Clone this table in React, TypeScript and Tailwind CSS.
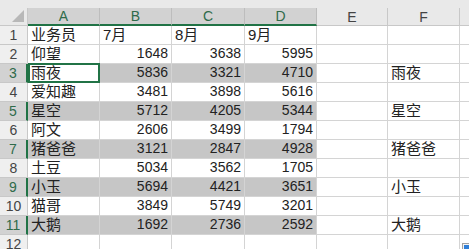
import React from "react";

type Row = (string | number)[];

const cols = ["A", "B", "C", "D", "E", "F", ""];
const widths = ["w-[72px]", "w-[72px]", "w-[73px]", "w-[72px]", "w-[71px]", "w-[72px]", "w-[20px]"];

const rows: Row[] = [
  ["业务员", "7月", "8月", "9月"],
  ["仰望", 1648, 3638, 5995],
  ["雨夜", 5836, 3321, 4710, "", "雨夜"],
  ["爱知趣", 3481, 3898, 5616],
  ["星空", 5712, 4205, 5344, "", "星空"],
  ["阿文", 2606, 3499, 1794],
  ["猪爸爸", 3121, 2847, 4928, "", "猪爸爸"],
  ["土豆", 5034, 3562, 1705],
  ["小玉", 5694, 4421, 3651, "", "小玉"],
  ["猫哥", 3849, 5749, 3201],
  ["大鹅", 1692, 2736, 2592, "", "大鹅"],
  [],
];

const selectedRows = [3, 5, 7, 9, 11];

export default function App() {
  return (
    <div
      className="relative w-[469px] h-[249px] overflow-hidden bg-white text-[#222]"
      style={{ fontFamily: '"Liberation Sans", "Noto Sans CJK SC", sans-serif' }}
    >
      {/* top strip */}
      <div className="h-[8px] bg-[#e9e9e9]" />

      {/* column headers */}
      <div className="flex h-[18px]">
        <div className="w-[28px] shrink-0 bg-[#e9e9e9] border-r border-b border-[#c8c8c8] relative overflow-hidden">
          <div className="absolute right-[3px] bottom-[3px] w-0 h-0 border-l-[12px] border-l-transparent border-b-[12px] border-b-[#b8b8b8]" />
        </div>
        {cols.map((c, i) => {
          const sel = i < 4;
          return (
            <div
              key={i}
              className={`${widths[i]} shrink-0 flex items-center justify-center text-[14px] leading-none border-r ${
                sel
                  ? "bg-[#d2d2d2] text-[#2f6b4a] border-[#bdbdbd] border-b-2 border-b-[#217346]"
                  : "bg-[#e9e9e9] text-[#444] border-[#c8c8c8] border-b"
              }`}
            >
              {c}
            </div>
          );
        })}
      </div>

      {/* body rows */}
      {rows.map((r, ri) => {
        const n = ri + 1;
        const sel = selectedRows.includes(n);
        return (
          <div key={ri} className="flex h-[19px]">
            <div
              className={`w-[28px] shrink-0 flex items-center justify-center text-[14px] leading-none border-b border-[#c8c8c8] ${
                sel
                  ? "bg-[#d2d2d2] text-[#2f6b4a] border-r-2 border-r-[#217346]"
                  : "bg-[#efefef] text-[#444] border-r"
              }`}
            >
              {n}
            </div>
            {cols.map((_, ci) => {
              const v = r[ci];
              const isNum = typeof v === "number";
              const fill = sel && ci < 4;
              const active = n === 3 && ci === 0;
              return (
                <div
                  key={ci}
                  className={`${widths[ci]} shrink-0 relative flex items-end pb-[1px] px-[3px] border-r border-b border-[#d4d4d4] ${
                    isNum ? "justify-end text-[14px]" : "justify-start text-[15px]"
                  } ${fill && !active ? "bg-[#c6c6c6]" : ""}`}
                >
                  <span className="leading-[17px] whitespace-nowrap">{v ?? ""}</span>
                  {active && (
                    <div className="absolute left-[0px] top-[-1px] right-[-1px] bottom-[-1px] border-2 border-[#217346]" />
                  )}
                </div>
              );
            })}
          </div>
        );
      })}

      {/* paste options tag */}
      <div className="absolute left-[462px] top-[243px] w-[12px] h-[12px] border border-[#a0a0a0] bg-[#f4f4f4] p-[1px]">
        <div className="w-[6px] h-[5px] bg-[#2f7fd8]" />
      </div>
    </div>
  );
}
